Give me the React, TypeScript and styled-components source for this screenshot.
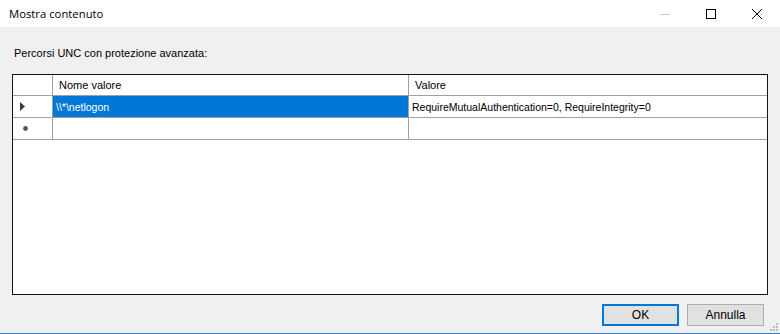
import styled, { createGlobalStyle } from "styled-components";

const GlobalStyle = createGlobalStyle`
  html, body {
    margin: 0;
    padding: 0;
    background: #f0f0f0;
  }
  #root {
    width: 780px;
    height: 334px;
  }
`;

const rows = [
  { name: "\\\\*\\netlogon", value: "RequireMutualAuthentication=0, RequireIntegrity=0", selected: true },
];

export default function App() {
  return (
    <>
      <GlobalStyle />
      <Window>
        <TitleBar>
          <Title>Mostra contenuto</Title>
          <Controls>
            <CtrlButton>
              <svg width="10" height="10" viewBox="0 0 10 10">
                <line x1="0" y1="5.5" x2="10" y2="5.5" stroke="#c8c8c8" strokeWidth="1" />
              </svg>
            </CtrlButton>
            <CtrlButton>
              <svg width="10" height="10" viewBox="0 0 10 10">
                <rect x="0.5" y="0.5" width="9" height="9" fill="none" stroke="#000" strokeWidth="1" />
              </svg>
            </CtrlButton>
            <CtrlButton>
              <svg width="10" height="10" viewBox="0 0 10 10">
                <path d="M0 0 L10 10 M10 0 L0 10" stroke="#000" strokeWidth="1" />
              </svg>
            </CtrlButton>
          </Controls>
        </TitleBar>

        <Body>
          <Label>Percorsi UNC con protezione avanzata:</Label>
          <Grid>
            <Row $header>
              <RowHead />
              <Cell $header $width={356}>Nome valore</Cell>
              <Cell $header $width={358}>Valore</Cell>
            </Row>
            {rows.map((r) => (
              <Row key={r.name}>
                <RowHead>
                  {r.selected && (
                    <svg width="5" height="9" viewBox="0 0 5 9">
                      <path d="M0 0 L5 4.5 L0 9 Z" fill="#3c3c3c" />
                    </svg>
                  )}
                </RowHead>
                <Cell $width={356} $selected={r.selected}>{r.name}</Cell>
                <Cell $width={358}>{r.value}</Cell>
              </Row>
            ))}
            <Row>
              <RowHead $offset={2}>
                <svg width="7" height="7" viewBox="0 0 7 7">
                  <circle cx="3.5" cy="3.5" r="2.4" fill="#555" />
                </svg>
              </RowHead>
              <Cell $width={356} />
              <Cell $width={358} />
            </Row>
          </Grid>
          <Footer>
            <Button $default>OK</Button>
            <Button>Annulla</Button>
          </Footer>
        </Body>
        <Grip>
          <svg width="10" height="10" viewBox="0 0 10 10">
            {[
              [8, 2], [5, 5], [8, 5], [2, 8], [5, 8], [8, 8],
            ].map(([x, y]) => (
              <rect key={`${x}-${y}`} x={x} y={y} width="2" height="2" fill="#bcbcbc" />
            ))}
          </svg>
        </Grip>
      </Window>
    </>
  );
}

// --------styled components---------
const Window = styled.div`
  position: relative;
  width: 780px;
  height: 334px;
  box-sizing: border-box;
  background: #f0f0f0;
  border-bottom: 1px solid #2b7fd6;
  display: flex;
  flex-direction: column;
  font-family: "Liberation Sans", Arial, sans-serif;
  font-size: 11px;
  color: #000;
`;

const TitleBar = styled.div`
  height: 27px;
  background: #fff;
  display: flex;
  align-items: center;
  justify-content: space-between;
  padding-left: 9px;
`;

const Title = styled.span`
  font-family: "Open Sans", "Noto Sans", sans-serif;
  font-size: 11.3px;
  padding-bottom: 1px;
`;

const Controls = styled.div`
  display: flex;
  align-self: stretch;
`;

const CtrlButton = styled.div`
  width: 46px;
  display: flex;
  align-items: center;
  justify-content: center;
`;

const Body = styled.div`
  flex: 1;
  display: flex;
  flex-direction: column;
  padding: 0 13px 0 12px;
`;

const Label = styled.div`
  margin-top: 19px;
  margin-left: 2px;
  height: 28px;
  line-height: 14px;
`;

const Grid = styled.div`
  height: 221px;
  box-sizing: border-box;
  width: 756px;
  border: 1px solid #141414;
  background: #fff;
`;

const Row = styled.div<{ $header?: boolean }>`
  display: flex;
  height: ${(p) => (p.$header ? 21 : 22)}px;
  box-sizing: border-box;
  border-bottom: 1px solid #a0a0a0;
  width: fit-content;
`;

const RowHead = styled.div<{ $offset?: number }>`
  width: 40px;
  border-right: 1px solid #a0a0a0;
  display: flex;
  align-items: center;
  padding-left: ${(p) => 7 + (p.$offset ?? 0)}px;
  box-sizing: border-box;
  background: #fff;
`;

const Cell = styled.div<{ $width: number; $header?: boolean; $selected?: boolean }>`
  width: ${(p) => p.$width}px;
  box-sizing: border-box;
  border-right: 1px solid #a0a0a0;
  display: flex;
  align-items: center;
  white-space: nowrap;
  overflow: hidden;
  background: ${(p) => (p.$selected ? "#0078d7" : "#fff")};
  color: ${(p) => (p.$selected ? "#fff" : "#000")};
  padding-left: ${(p) => (p.$header ? 6 : 3)}px;
  font-size: ${(p) => (p.$header ? 11 : 10.5)}px;

  &:last-child {
    border-right: none;
  }
`;

const Footer = styled.div`
  display: flex;
  justify-content: flex-end;
  gap: 8px;
  margin-top: 9px;
  padding-right: 3px;
`;

const Button = styled.div<{ $default?: boolean }>`
  width: 77px;
  height: 22px;
  box-sizing: border-box;
  display: flex;
  align-items: center;
  justify-content: center;
  background: #e1e1e1;
  border: ${(p) => (p.$default ? "2px solid #0078d7" : "1px solid #adadad")};
  font-size: 12px;
`;

const Grip = styled.div`
  position: absolute;
  right: 2px;
  bottom: 2px;
  width: 10px;
  height: 10px;
  line-height: 0;
`;
